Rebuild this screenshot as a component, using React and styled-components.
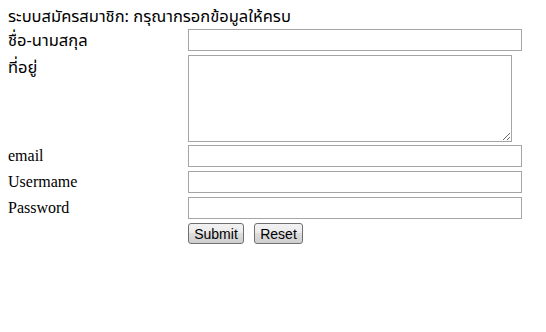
import React from 'react';
import styled, { createGlobalStyle } from 'styled-components';

const GlobalStyle = createGlobalStyle`
  body {
    margin: 8px;
    background: #ffffff;
    color: #000000;
    font-family: "Liberation Serif", "Noto Sans Thai", "Noto Sans", serif;
    font-size: 16px;
  }
`;

const thaiFont = 'Tahoma, "Noto Sans Thai", "Noto Sans", sans-serif';

const StyledForm = styled.form`
  display: grid;
  grid-template-columns: 180px auto;
  row-gap: 4px;
  align-items: start;
  justify-content: start;
`;

const StyledTitle = styled.div`
  grid-column: 1 / 3;
  height: 17px;
  line-height: 17px;
  font-family: ${thaiFont};
  font-size: 16.5px;
  white-space: nowrap;
`;

const StyledLabel = styled.label`
  line-height: 22px;
  font-family: ${props => (props.thai ? thaiFont : '"Liberation Serif", serif')};
  font-size: ${props => (props.thai ? '16.5px' : '16px')};
  margin-top: ${props => (props.thai ? 1 : 0)}px;
  white-space: nowrap;
`;

const StyledInput = styled.input`
  box-sizing: border-box;
  width: 334px;
  height: 22px;
  margin: 0;
  padding: 1px 2px;
  border: 1px solid #a5a5a5;
  font-size: 13px;
`;

const StyledTextarea = styled.textarea`
  box-sizing: border-box;
  width: 324px;
  height: 87px;
  margin: -1px 0 -1px;
  padding: 2px;
  border: 1px solid #a5a5a5;
  font-size: 13px;
`;

const StyledButtons = styled.div`
  grid-column: 2;
  display: flex;
  gap: 10px;
`;

const StyledButton = styled.button`
  box-sizing: border-box;
  height: 21px;
  width: ${props => props.width}px;
  padding: 0;
  border: 1px solid #707070;
  border-radius: 3px;
  background: linear-gradient(#f2f2f2 0%, #ebebeb 45%, #dddddd 50%, #cfcfcf 100%);
  font-family: "Liberation Sans", Arial, sans-serif;
  font-size: 14px;
  color: #000000;
`;

const App = () => (
  <>
    <GlobalStyle />
    <StyledForm onSubmit={e => e.preventDefault()}>
      <StyledTitle>ระบบสมัครสมาชิก: กรุณากรอกข้อมูลให้ครบ</StyledTitle>

      <StyledLabel thai>ชื่อ-นามสกุล</StyledLabel>
      <StyledInput type="text" />

      <StyledLabel thai>ที่อยู่</StyledLabel>
      <StyledTextarea />

      <StyledLabel>email</StyledLabel>
      <StyledInput type="text" />

      <StyledLabel>Usermame</StyledLabel>
      <StyledInput type="text" />

      <StyledLabel>Password</StyledLabel>
      <StyledInput type="password" />

      <StyledButtons>
        <StyledButton type="submit" width={56}>Submit</StyledButton>
        <StyledButton type="reset" width={49}>Reset</StyledButton>
      </StyledButtons>
    </StyledForm>
  </>
);

export default App;
